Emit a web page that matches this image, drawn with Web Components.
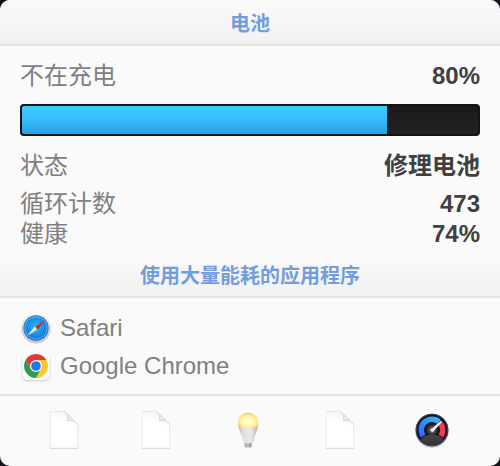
<!DOCTYPE html>
<html lang="zh-CN">
<head>
<meta charset="utf-8">
<meta name="viewport" content="width=device-width, initial-scale=1">
<title>电池</title>
<style>
  html { background: #15131a; }
  body { margin: 0; font-family: "Liberation Sans", "Noto Sans CJK SC", sans-serif; font-size: 24px; line-height: 30px; color: #808080; }
</style>
</head>
<body>
<battery-panel>
  <section-heading>电池</section-heading>
  <panel-stats>
    <stat-row label="不在充电" value="80%"></stat-row>
    <battery-meter value="80" label="电池电量"></battery-meter>
    <stat-row label="状态" value="修理电池"></stat-row>
    <stat-row label="循环计数" value="473" spaced></stat-row>
    <stat-row label="健康" value="74%"></stat-row>
  </panel-stats>
  <section-heading>使用大量能耗的应用程序</section-heading>
  <app-list>
    <app-item name="Safari"><glyph-icon slot="icon" name="safari" size="32"></glyph-icon></app-item>
    <app-item name="Google Chrome"><glyph-icon slot="icon" name="chrome" size="32"></glyph-icon></app-item>
  </app-list>
  <panel-toolbar>
    <tool-button label="文档 1"><glyph-icon name="page" size="40"></glyph-icon></tool-button>
    <tool-button label="文档 2"><glyph-icon name="page" size="40"></glyph-icon></tool-button>
    <tool-button label="节能"><glyph-icon name="bulb" size="40"></glyph-icon></tool-button>
    <tool-button label="文档 3"><glyph-icon name="page" size="40"></glyph-icon></tool-button>
    <tool-button label="仪表"><glyph-icon name="gauge" size="40"></glyph-icon></tool-button>
  </panel-toolbar>
</battery-panel>

<script>
const ticks = Array.from({ length: 36 }, (_, i) =>
  `<path d="M16 4.2V5.7" transform="rotate(${i * 10} 16 16)"/>`).join('');

const icons = {
  safari: `<svg viewBox="0 0 32 32">
    <defs><linearGradient id="r" x2="0" y2="1"><stop stop-color="#fafafa"/><stop offset="1" stop-color="#c6c6c8"/></linearGradient>
    <radialGradient id="b" cx=".5" cy=".45"><stop stop-color="#20c5f5"/><stop offset="1" stop-color="#176fd6"/></radialGradient></defs>
    <circle cx="16" cy="16.6" r="14.8" fill="#999" opacity=".55"/>
    <circle cx="16" cy="16" r="14.5" fill="url(#r)"/>
    <circle cx="16" cy="16" r="12.7" fill="url(#b)"/>
    <g stroke="#d2efff" stroke-width=".6">${ticks}</g>
    <path d="M24.5 8.5 14.6 14.4l2.8 3.2z" fill="#f5362f"/>
    <path d="M7.5 23.5 14.6 14.4l2.8 3.2z" fill="#f8f8f8"/>
    <path d="M24.5 8.5 16 16l1.4 1.6z" fill="#c71924"/>
    <path d="M7.5 23.5 16 16l1.4 1.6z" fill="#c9d5de"/></svg>`,
  chrome: `<svg viewBox="0 0 32 32">
    <rect x="1.4" y="2.2" width="29.2" height="29" rx="6.5" fill="#aaa" opacity=".6"/>
    <rect x="1.7" y="1.7" width="28.6" height="28.6" rx="6.3" fill="#fcfcfc"/>
    <path d="M16 10H26.39A12 12 0 0 0 5.61 10L10.8 19z" fill="#df3b30"/>
    <path d="M10.8 19 5.61 10A12 12 0 0 0 16 28L21.2 19z" fill="#259f49"/>
    <path d="M21.2 19 16 28A12 12 0 0 0 26.39 10H16z" fill="#fbc62e"/>
    <circle cx="16" cy="16" r="6" fill="#fff"/><circle cx="16" cy="16" r="4.8" fill="#2078ea"/></svg>`,
  page: `<svg viewBox="0 0 40 40">
    <defs><linearGradient id="p" x1=".5" x2=".3" y2=".7"><stop stop-color="#f3f3f3"/><stop offset=".4" stop-color="#fff"/></linearGradient>
    <linearGradient id="f" x1="1" y1="0" x2="0" y2="1"><stop stop-color="#fff"/><stop offset="1" stop-color="#e4e4e4"/></linearGradient></defs>
    <path d="M6 2H20.5L34 15.5V39H6z" fill="#c8c8c8" opacity=".55"/>
    <path d="M6.2 1.4H20.5L33.8 14.8V38.1H6.2z" fill="url(#p)" stroke="#dedede" stroke-width=".6"/>
    <path d="M20.5 1.4c2 1.5 3 4.5 2.8 9.2 4.5-.1 8.5.8 10.5 4.2" fill="#ececec"/>
    <path d="M23.6 4.5V10.6H29.7z" fill="url(#f)" stroke="#d0d0d0" stroke-width=".7"/>
    <path d="M20.5 1.4 33.8 14.8" fill="none" stroke="#cfcfcf" stroke-width=".9"/></svg>`,
  bulb: `<svg viewBox="0 0 40 40">
    <defs><radialGradient id="g" cx=".5" cy=".58" r=".58"><stop stop-color="#fffff8"/><stop offset=".3" stop-color="#fffbc8"/><stop offset=".75" stop-color="#fdec8a"/><stop offset="1" stop-color="#e8c468"/></radialGradient>
    <linearGradient id="n"><stop stop-color="#b9b9be"/><stop offset=".25" stop-color="#e1e1e5"/><stop offset=".65" stop-color="#e9e9ed"/><stop offset="1" stop-color="#b0b0b6"/></linearGradient>
    <linearGradient id="s"><stop stop-color="#9c9c98"/><stop offset=".4" stop-color="#e5e5e0"/><stop offset="1" stop-color="#989894"/></linearGradient></defs>
    <path d="M16.8 32H23.6V36.2Q23 38.3 20.2 38.3T16.8 36.2z" fill="url(#s)"/>
    <path d="M16.8 34.2l6.8-.7M16.8 36.3l6.8-.7" stroke="#888882" stroke-width=".7"/>
    <path d="M10.3 15H29.9C29.6 21 26.6 24 25.6 31.5Q25.3 33.3 20.2 33.3T15 31.5C14 24 10.8 21 10.3 15z" fill="url(#n)"/>
    <path d="M10.5 16.8A10.3 10.3 0 1 1 29.7 16.8Q20 18.7 10.5 16.8z" fill="url(#g)"/></svg>`,
  gauge: `<svg viewBox="0 0 40 40">
    <defs><linearGradient id="u" x1="1" y1="0" x2="0" y2="1"><stop stop-color="#35b5f7"/><stop offset="1" stop-color="#3269f0"/></linearGradient>
    <radialGradient id="h"><stop stop-color="#9a9a9a"/><stop offset=".5" stop-color="#444"/><stop offset="1" stop-color="#101216"/></radialGradient>
    <linearGradient id="k" x2="0" y2="1"><stop stop-color="#444547"/><stop offset="1" stop-color="#303234"/></linearGradient></defs>
    <circle cx="20" cy="20.9" r="16.8" fill="#a5a8ae" opacity=".7"/>
    <circle cx="20" cy="20" r="16.3" fill="#10132a"/>
    <circle cx="20" cy="20" r="15.9" fill="none" stroke="#5b6070" stroke-width=".7"/>
    <path d="M11.2 26A10.7 10.7 0 0 1 27 11.8" fill="none" stroke="url(#u)" stroke-width="5.5"/>
    <path d="M28.3 13.2A10.7 10.7 0 0 1 28.8 26" fill="none" stroke="#f33f48" stroke-width="5.5"/>
    <circle cx="20" cy="20" r="6.7" fill="url(#h)"/>
    <path d="M8.5 30.2Q11 24.8 20 24.8T31.5 30.2A15.6 15.6 0 0 1 8.5 30.2z" fill="url(#k)"/>
    <path d="M19 19.2 28.8 10.8 29.9 11.9 21.3 21.4Q19.4 22.2 18.6 20.5z" fill="#f7f7f7"/></svg>`
};

const define = (name, html, setup) => customElements.define(name, class extends HTMLElement {
  connectedCallback() {
    if (this.shadowRoot) return;
    const template = document.createElement('template');
    template.innerHTML = html;
    this.attachShadow({ mode: 'open' }).append(template.content.cloneNode(true));
    if (setup) setup(this, this.shadowRoot);
  }
});

define('glyph-icon', `<style>:host { display: block; flex: none; } svg { display: block; width: 100%; height: 100%; }</style>`, (el, root) => {
  const size = el.getAttribute('size') + 'px';
  el.style.width = size;
  el.style.height = size;
  el.setAttribute('aria-hidden', 'true');
  root.innerHTML += icons[el.getAttribute('name')];
});

define('battery-panel', `<style>
  :host { display: block; background: #fafafa; border-radius: 10px; overflow: hidden; }
</style><main><slot></slot></main>`);

define('section-heading', `<style>
  :host { display: block; background: linear-gradient(#fafafa, #f1f1f1); border-bottom: 2px solid #e4e4e4; }
  h2 { margin: 0; padding: 10px 16px 6px; font-size: 20px; line-height: 28px; font-weight: 700; text-align: center; color: #729ddd; }
</style><h2><slot></slot></h2>`);

define('panel-stats', `<style>
  :host { display: block; padding: 15px 20px 3px; }
</style><slot></slot>`);

define('stat-row', `<style>
  :host { display: block; }
  :host([spaced]) { margin-top: 8px; }
  dl { display: flex; justify-content: space-between; gap: 16px; margin: 0; }
  dd { margin: 0; font-weight: 700; color: #404040; text-align: right; }
</style><dl><dt></dt><dd></dd></dl>`, (el, root) => {
  root.querySelector('dt').textContent = el.getAttribute('label');
  root.querySelector('dd').textContent = el.getAttribute('value');
});

define('battery-meter', `<style>
  :host { display: block; margin: 13px 0 15px; }
  .track { height: 28px; border: 2px solid #141414; border-radius: 4px; background: linear-gradient(#1a1a1a, #222); overflow: hidden; }
  .fill { height: 100%; background: linear-gradient(#3dccff, #38bbfb 50%, #279fe6); }
</style><div class="track" role="meter" aria-valuemin="0" aria-valuemax="100"><div class="fill"></div></div>`, (el, root) => {
  const track = root.querySelector('.track');
  track.setAttribute('aria-valuenow', el.getAttribute('value'));
  track.setAttribute('aria-label', el.getAttribute('label'));
  root.querySelector('.fill').style.width = el.getAttribute('value') + '%';
});

define('app-list', `<style>
  :host { display: block; padding: 11px 20px 9px; border-bottom: 2px solid #e4e4e4; }
</style><div role="list"><slot></slot></div>`);

define('app-item', `<style>
  :host { display: flex; align-items: center; gap: 8px; height: 38px; }
</style><slot name="icon"></slot><span></span>`, (el, root) => {
  el.setAttribute('role', 'listitem');
  root.querySelector('span').textContent = el.getAttribute('name');
});

define('panel-toolbar', `<style>
  :host { display: grid; grid-template-columns: repeat(5, 1fr); padding: 14px 22px 16px 18px; }
</style><slot></slot>`);

define('tool-button', `<style>
  :host { display: flex; justify-content: center; }
  button { padding: 0; border: 0; background: none; cursor: pointer; }
</style><button type="button"><slot></slot></button>`, (el, root) => {
  root.querySelector('button').setAttribute('aria-label', el.getAttribute('label'));
});
</script>
</body>
</html>
